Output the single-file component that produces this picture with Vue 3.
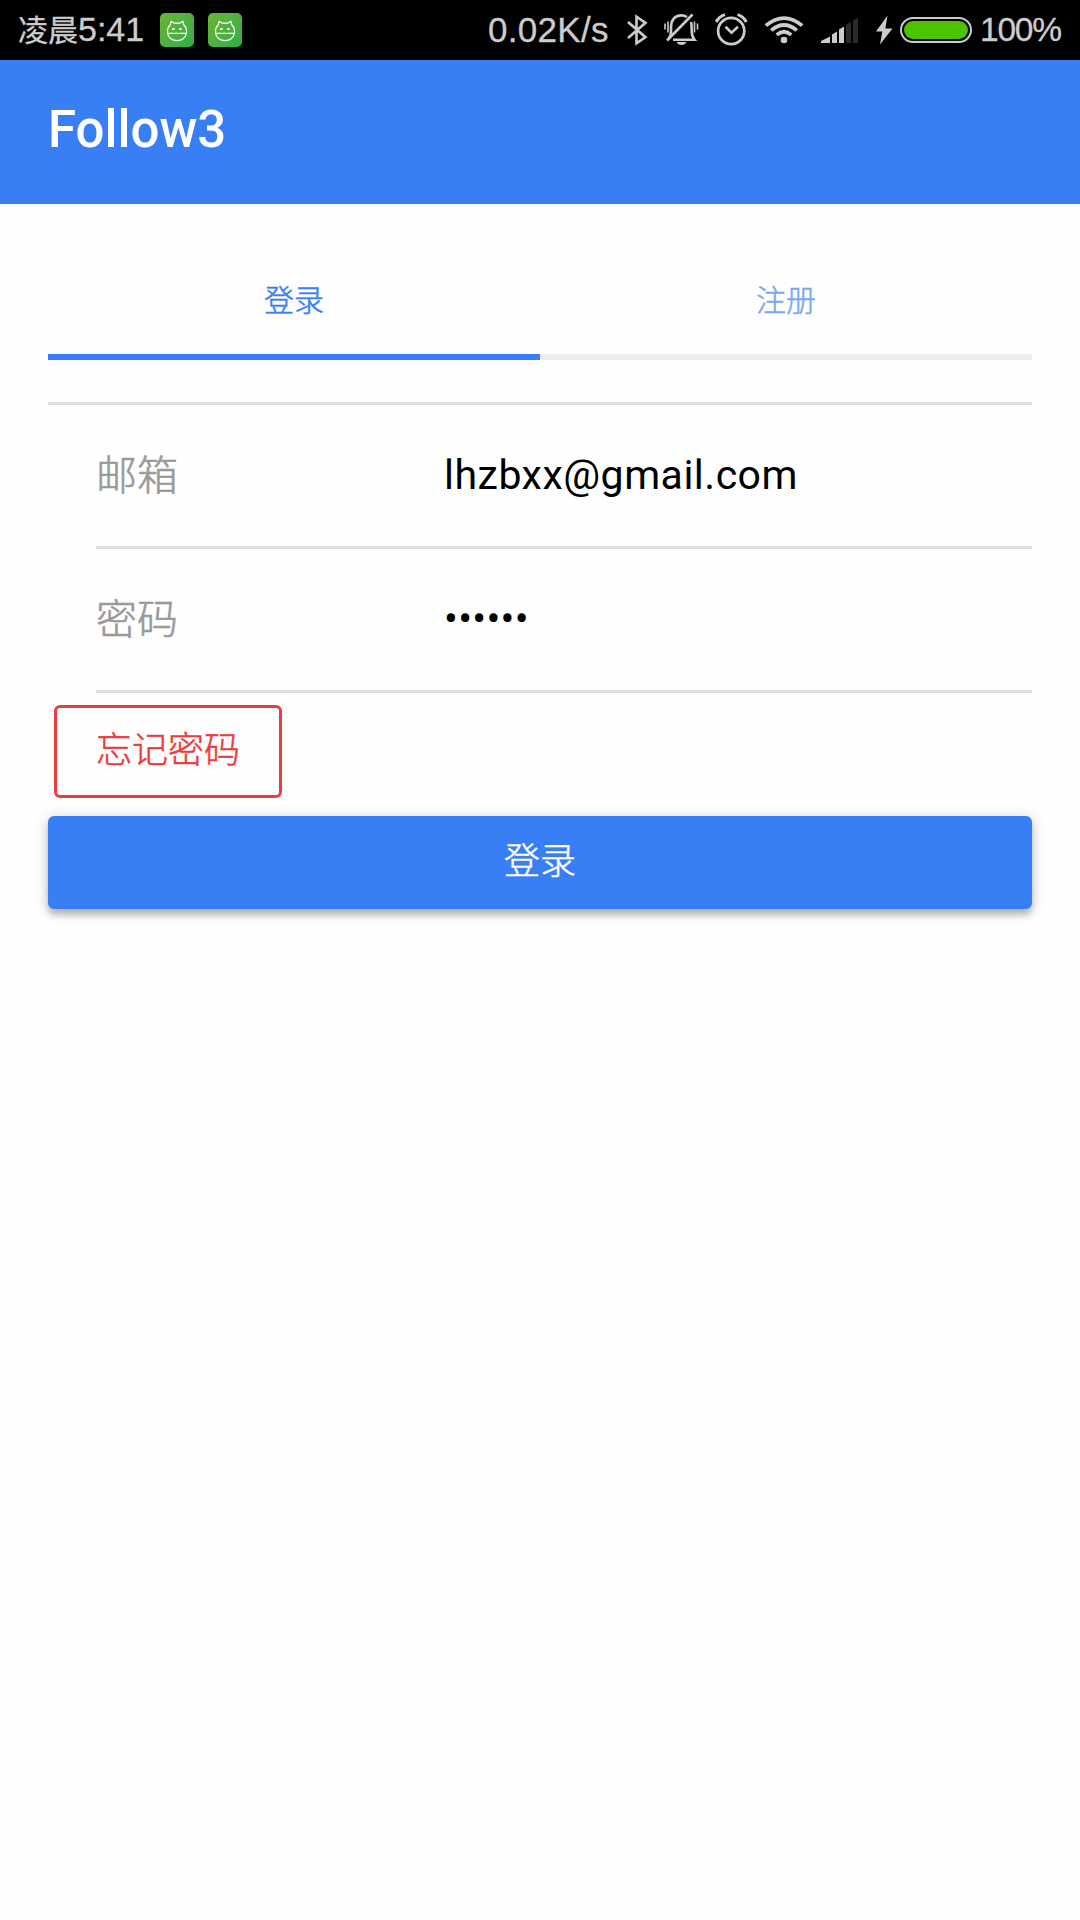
<script setup>
import { ref } from 'vue'

const title = 'Follow3'
const tabs = ['登录', '注册']
const active = ref(0)
const email = ref('lhzbxx@gmail.com')
const password = '••••••'
</script>

<template>
  <div class="screen">
    <div class="status">
      <span class="time"><span class="cjk">凌晨</span>5:41</span>
      <svg v-for="n in 2" :key="n" class="app" :class="'app' + n" width="34" height="34" viewBox="0 0 34 34">
        <defs>
          <linearGradient :id="'g' + n" x1="0" y1="0" x2="1" y2="1">
            <stop offset="0" stop-color="#6db536" />
            <stop offset="1" stop-color="#2fae46" />
          </linearGradient>
        </defs>
        <rect width="34" height="34" rx="5" :fill="`url(#g${n})`" />
        <path d="M7.5 19.5C7.3 16 8.2 13.5 10.3 11.7L11 8.3L14 10.1H20L23 8.3L23.7 11.7C25.8 13.5 26.7 16 26.5 19.5C26 24.5 22 27.7 17 27.7S8 24.5 7.5 19.5ZM7.5 20.3H26.5" fill="none" stroke="#fff" stroke-width="1.2" stroke-linejoin="round" />
        <path d="M12.2 16h2.4M19.2 16h2.4" stroke="#fff" stroke-width="1.8" />
      </svg>
      <span class="rate">0.02K/s</span>
      <svg class="icons" width="254" height="60" viewBox="620 0 254 60" fill="none" stroke="#ccc">
        <path d="M628 22L645.5 37.2L636.5 43.3V16.7L645.5 22.8L628 38" stroke-width="2.6" />
        <g>
          <path d="M671 33V27C671 20 675 15.4 681 15.4C683.5 15.4 685.5 16 687 17M691 22C691.6 24 691.7 27 691.7 31C691.7 35 692.7 37.5 694.5 39.7H673" stroke-width="2.6" />
          <path d="M667 40.5L692.5 14.5" stroke-width="2.6" />
          <path d="M671 32C671 35 669.7 37.5 668.3 39" stroke-width="2.4" />
          <path d="M676.5 42H686.5C685.5 44 684 45 681.5 45S677.5 44 676.5 42Z" fill="#ccc" stroke="none" />
          <path d="M665 24V30M668 22V33M694.5 22V33M697.5 24V30" stroke-width="1.6" transform="translate(0 -.5)" />
        </g>
        <g>
          <circle cx="731.2" cy="31" r="13.1" stroke-width="2.7" />
          <path d="M725.5 26.8L731.5 32.7L738 26.8" stroke-width="2.7" />
          <path d="M716.2 22Q719 16.5 725 14.6M746.3 22Q743.5 16.5 737.5 14.6" stroke-width="3" />
        </g>
        <g stroke-width="3.7">
          <circle cx="784" cy="40" r="3.3" fill="#ccc" stroke="none" />
          <path d="M776.7 34.8Q784 28.7 791.3 34.8" />
          <path d="M771.2 30.3Q784 19.7 796.8 30.3" />
          <path d="M765.8 25.7Q784 10.5 802.2 25.7" />
        </g>
        <g stroke="none">
          <path d="M821 43V41L830 36.5V43ZM832 43V34.5L837 31.5V43ZM839 43V29.5L844 26.5V43Z" fill="#ccc" />
          <path d="M846 43V25L851 21.5V43ZM853 43V20.5L858 18V43Z" fill="#2b2b2b" />
        </g>
      </svg>
      <svg class="battery" width="100" height="60" viewBox="874 0 100 60">
        <path d="M887.5 15.5L876 31.5H882.3L880 44.5L892.5 28.5H885.3Z" fill="#ccc" />
        <rect x="901" y="18" width="70" height="24" rx="12" fill="none" stroke="#ccc" stroke-width="2" />
        <rect x="904" y="21" width="64" height="18" rx="9" fill="#4bc400" />
      </svg>
      <span class="percent">100%</span>
    </div>

    <header class="bar"><h1>{{ title }}</h1></header>

    <main class="content">
      <nav class="tabs">
        <button v-for="(t, i) in tabs" :key="t" class="tab" :class="{ on: active === i }" @click="active = i">{{ t }}</button>
      </nav>
      <div class="list">
        <label class="item"><span class="label">邮箱</span><span class="value">{{ email }}</span></label>
        <label class="item"><span class="label">密码</span><span class="value dots">{{ password }}</span></label>
      </div>
      <button class="btn forgot">忘记密码</button>
      <button class="btn login">登录</button>
    </main>
  </div>
</template>

<style>
body { background: #fefefe; }
</style>

<style scoped>
.screen {
  width: 1080px;
  height: 1920px;
  overflow: hidden;
  background: #fefefe;
  font-family: Roboto, "Noto Sans CJK SC", sans-serif;
}
button {
  margin: 0;
  padding: 0;
  border: 0;
  background: none;
  font-family: inherit;
  font-weight: 300;
  -webkit-text-stroke: .5px currentColor;
}
.status {
  display: flex;
  align-items: center;
  height: 60px;
  background: #000;
  color: #ccc;
  font: 34px/60px "Liberation Sans", "Noto Sans CJK SC", sans-serif;
  white-space: nowrap;
}
.time { width: 142px; margin-left: 18px; -webkit-text-stroke: .3px #ccc; }
.cjk { font-size: 30px; }
.app { flex: none; }
.app2 { margin-left: 14px; }
.rate { width: 132px; margin-left: 246px; font-size: 35px; letter-spacing: .3px; -webkit-text-stroke: .3px #ccc; }
.icons { flex: none; }
.battery { flex: none; }
.percent { margin-left: 6px; font-size: 33.5px; letter-spacing: -1.2px; -webkit-text-stroke: .3px #ccc; }
.bar {
  display: flex;
  align-items: center;
  height: 144px;
  padding: 0 48px;
  box-sizing: border-box;
  background: #387ef5;
}
h1 {
  margin: 0 0 4px;
  color: #fff;
  font-size: 51px;
  font-weight: 500;
  line-height: 60px;
}
.content { padding: 48px 48px 0; }
.tabs { display: flex; height: 108px; }
.tab {
  flex: 1;
  padding-bottom: 10px;
  border-bottom: 6px solid #ededed;
  color: #77a7f8;
  font-size: 30px;
}
.tab.on { border-color: #387ef5; color: #387ef5; }
.list { margin-top: 42px; border-top: 3px solid #dedede; }
.item {
  display: flex;
  align-items: center;
  height: 144px;
  margin-left: 48px;
  box-sizing: border-box;
  border-bottom: 3px solid #dedede;
  font-size: 41px;
}
.label { width: 348px; padding-bottom: 8px; color: #999; font-weight: 300; -webkit-text-stroke: .6px #999; }
.value { padding-bottom: 1px; color: #000; letter-spacing: .5px; }
.dots { letter-spacing: .3px; }
.btn {
  display: block;
  box-sizing: border-box;
  height: 93px;
  padding-bottom: 10px;
  border-radius: 6px;
  font-size: 36px;
}
.forgot {
  width: 228px;
  margin: 12px 0 18px 6px;
  border: 3px solid #ed3a3a;
  color: #ed3a3a;
}
.login {
  width: 100%;
  background: #387ef5;
  color: #fff;
  box-shadow: 0 6px 6px rgba(0, 0, 0, .22), 0 2px 15px rgba(0, 0, 0, .16);
}
</style>
